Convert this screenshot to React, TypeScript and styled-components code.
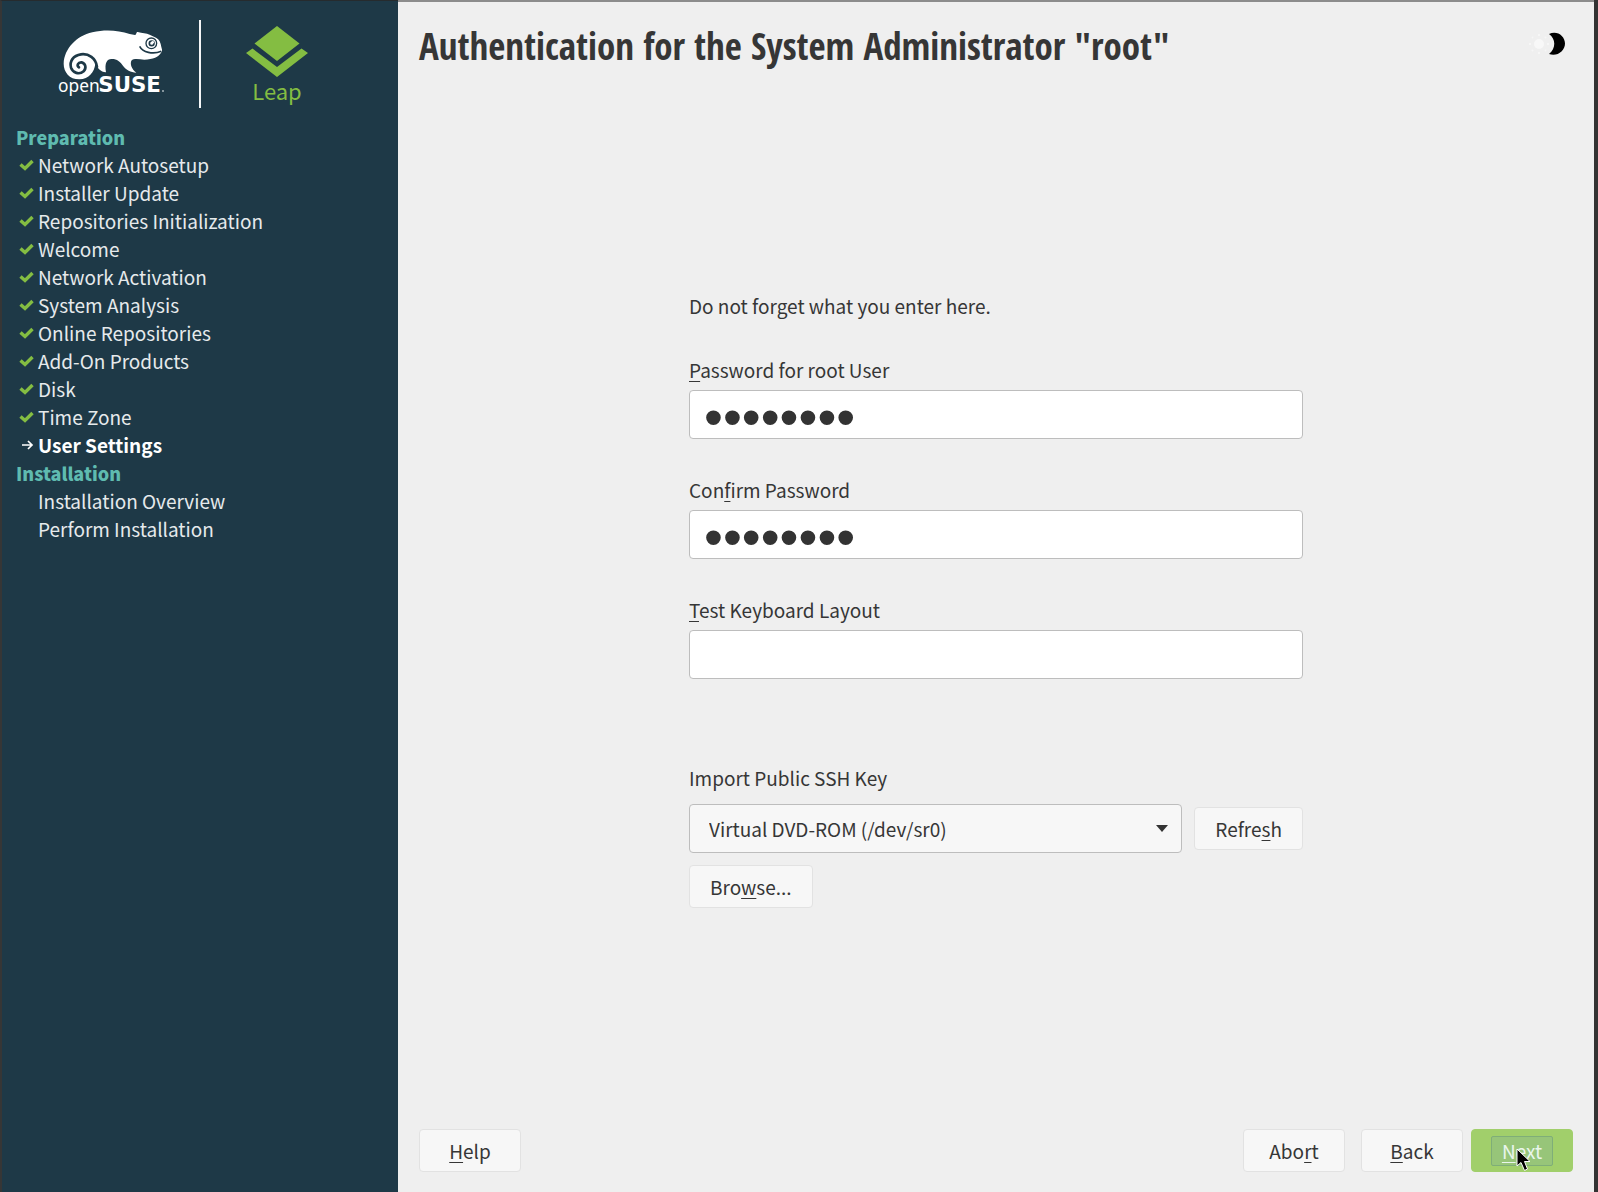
import React, { useState } from "react";
import styled, { createGlobalStyle } from "styled-components";

const sans = '"Noto Sans CJK SC", "Noto Sans", sans-serif';

const GlobalStyle = createGlobalStyle`
  *, *::before, *::after { box-sizing: border-box; }
  body {
    margin: 0;
    background: #efefef;
    color: #363636;
    font-family: ${sans};
    font-size: 19px;
    line-height: 28px;
  }
  button, input, select { font: inherit; color: inherit; }
`;

const Installer = styled.div`
  display: grid;
  grid-template-columns: minmax(240px, 398px) 1fr;
  min-height: 100vh;
  border-right: 4px solid #333333;
`;

const Sidebar = styled.aside`
  background: #1e3947;
  border-top: 1px solid #262b2e;
  border-left: 2px solid #363636;
  padding: 19px 14px;
`;

const Branding = styled.header`
  display: flex;
  align-items: center;
  height: 88px;
  padding-left: 43px;
`;

const Divider = styled.span`
  width: 2px;
  height: 88px;
  margin: 0 45px 0 32px;
  background: #f4f6f7;
`;

const ProductLogo = styled.svg`
  display: block;
  overflow: visible;
`;

const StageTitle = styled.h2`
  margin: 0;
  font-size: 18px;
  line-height: 28px;
  font-weight: 900;
  color: #5fbbb0;
`;

const Stages = styled.nav`
  padding-top: 15px;
`;

const StepList = styled.ol`
  margin: 0;
  padding: 0;
  list-style: none;
`;

const Step = styled.li<{ $current?: boolean }>`
  display: grid;
  grid-template-columns: 22px 1fr;
  align-items: center;
  height: 28px;
  white-space: nowrap;
  color: ${(p) => (p.$current ? "#ffffff" : "#e6eaec")};
  font-weight: ${(p) => (p.$current ? 700 : 400)};
`;

const StepIcon = styled.svg`
  display: block;
  margin-left: 3px;
`;

const Main = styled.main`
  display: flex;
  flex-direction: column;
  border-top: 2px solid #8c8c8c;
  padding: 19px 21px 20px;
`;

const TitleBar = styled.header`
  display: flex;
  align-items: center;
  justify-content: space-between;
`;

const Title = styled.h1`
  margin: 0;
  font-family: "Open Sans Condensed", "Roboto Condensed", sans-serif;
  font-size: 37px;
  line-height: 50px;
  font-weight: 700;
`;

const ThemeButton = styled.button`
  display: block;
  margin-right: 7px;
  padding: 0;
  border: 0;
  background: none;
`;

const Content = styled.div`
  flex: 1;
  display: flex;
  align-items: center;
  justify-content: center;
`;

const Form = styled.form`
  width: 614px;
`;

const Hint = styled.p`
  margin: 0 0 36px;
`;

const Field = styled.div`
  display: flex;
  flex-direction: column;
  gap: 6px;
  margin-bottom: 37px;
`;

const Label = styled.label`
  display: block;
  font-variant-ligatures: no-common-ligatures;
`;

const Mnemonic = styled.u`
  text-decoration-thickness: 1px;
  text-underline-offset: 3px;
`;

const TextBox = styled.input`
  width: 100%;
  height: 49px;
  padding: 0 16px;
  border: 1px solid #bdbdbd;
  border-radius: 4px;
  background: #ffffff;
  color: #333333;
  outline: none;

  &[type="password"] {
    padding: 4px 14px 0;
    font-family: "Liberation Sans", Arial, sans-serif;
    font-size: 54px;
  }
`;

const ImportGroup = styled.section`
  display: grid;
  grid-template-columns: 1fr auto;
  gap: 12px;
  align-items: center;
  justify-items: start;
  margin-top: 85px;
`;

const ImportLabel = styled(Label)`
  grid-column: 1 / -1;
`;

const SelectWrap = styled.div`
  display: grid;
  grid-template-areas: "cell";
  align-items: center;
  width: 100%;
`;

const Select = styled.select`
  grid-area: cell;
  width: 100%;
  height: 49px;
  padding: 0 48px 0 19px;
  border: 1px solid #bdbdbd;
  border-radius: 4px;
  background: #f7f7f7;
  appearance: none;
  outline: none;
`;

const Arrow = styled.svg`
  grid-area: cell;
  justify-self: end;
  margin-right: 14px;
  pointer-events: none;
`;

const Button = styled.button<{ $wide?: boolean }>`
  position: relative;
  height: 43px;
  min-width: ${(p) => (p.$wide ? "102px" : "0")};
  padding: 0 20px;
  border: 1px solid #e2e2e2;
  border-radius: 4px;
  background: #f7f7f7;
`;

const PrimaryButton = styled(Button)`
  padding: 0;
  border-color: #a1cf6b;
  background: #a1cf6b;
  color: #e9f6ec;
`;

const FocusRing = styled.span`
  display: inline-block;
  padding: 0 10px;
  border: 1px solid #7fae78;
  border-radius: 2px;
  background: #97c579;
`;

const Pointer = styled.svg`
  position: absolute;
  left: 44px;
  top: 18px;
`;

const Actions = styled.footer`
  display: flex;
  align-items: center;
`;

const Navigation = styled.div`
  display: flex;
  gap: 16px;
  margin-left: auto;

  & > :last-child { margin-left: -8px; }
`;

function Geeko() {
  return (
    <ProductLogo width="108" height="72" viewBox="0 0 324 216" role="img" aria-label="openSUSE">
      <path
        fill="#fff"
        d="M14 107 C16 62 52 24 100 13 C140 3 178 7 212 18 L228 21 C233 20 231 12 236 12 C250 16 262 16 272 20 L291 29 C301 34 305 43 307 57 C309 65 311 68 307 73 C299 89 282 94 256 95 C241 94 225 90 217 98 C213 108 217 122 232 134 C215 134 201 126 193 115 C184 100 172 92 157 93 C144 94 136 104 141 133 C124 131 116 120 109 107 C106 132 90 153 61 154 C31 154 14 132 14 107Z"
      />
      <path
        fill="none"
        stroke="#1e3947"
        strokeWidth="8"
        strokeLinecap="round"
        d="M114 117 C111 90 88 76 66 79 C42 82 31 101 36 119 C41 135 61 141 74 130 C83 121 80 106 68 103 C57 102 52 113 60 118"
      />
      <path fill="none" stroke="#1e3947" strokeWidth="5" d="M242 55 C251 73 281 80 307 70" />
      <circle cx="277" cy="46" r="16" fill="#fff" stroke="#1e3947" strokeWidth="4" />
      <circle cx="278" cy="46" r="7" fill="none" stroke="#1e3947" strokeWidth="5" />
      <circle cx="281" cy="43" r="4" fill="#fff" />
      <text x="-3" y="193" fill="#fff" fontFamily="Noto Sans, sans-serif" fontSize="52">
        open
      </text>
      <text x="118" y="193" fill="#fff" fontFamily="DejaVu Sans, sans-serif" fontSize="64" fontWeight="700">
        SUSE
      </text>
      <circle cx="312" cy="189" r="3" fill="#a9b4ba" />
    </ProductLogo>
  );
}

function Leap() {
  return (
    <ProductLogo width="62" height="80" viewBox="0 0 62 80" role="img" aria-label="Leap">
      <path fill="#84bd42" d="M31 2 L53.500 19.500 L31 37 L8.500 19.500Z" />
      <path fill="#84bd42" d="M0 29 L6.500 24.500 L31 43 L55.500 24.500 L62 29 L31 53Z" />
      <text x="31" y="76" textAnchor="middle" fill="#84bd42" fontFamily="Noto Sans CJK SC, sans-serif" fontSize="22">
        Leap
      </text>
    </ProductLogo>
  );
}

type Status = "done" | "current" | "todo";

function StatusIcon({ status }: { status: Status }) {
  if (status === "todo") return <span />;
  return (
    <StepIcon width="15" height="14" viewBox="0 0 15 14" aria-hidden="true">
      {status === "done" ? (
        <path d="M1.500 6.500 L6 10.500 L13.500 3" fill="none" stroke="#84bd42" strokeWidth="3.400" />
      ) : (
        <path d="M3 7 H12.500 M9 3 L13 7 L9 11" fill="none" stroke="#fff" strokeWidth="1.700" />
      )}
    </StepIcon>
  );
}

const stages: { title: string; steps: [string, Status][] }[] = [
  {
    title: "Preparation",
    steps: [
      ["Network Autosetup", "done"],
      ["Installer Update", "done"],
      ["Repositories Initialization", "done"],
      ["Welcome", "done"],
      ["Network Activation", "done"],
      ["System Analysis", "done"],
      ["Online Repositories", "done"],
      ["Add-On Products", "done"],
      ["Disk", "done"],
      ["Time Zone", "done"],
      ["User Settings", "current"],
    ],
  },
  {
    title: "Installation",
    steps: [
      ["Installation Overview", "todo"],
      ["Perform Installation", "todo"],
    ],
  },
];

export default function App() {
  const [password, setPassword] = useState("geeko-42");
  const [confirm, setConfirm] = useState("geeko-42");

  return (
    <>
      <GlobalStyle />
      <Installer>
        <Sidebar>
          <Branding>
            <Geeko />
            <Divider />
            <Leap />
          </Branding>
          <Stages>
            {stages.map((stage) => (
              <React.Fragment key={stage.title}>
                <StageTitle>{stage.title}</StageTitle>
                <StepList>
                  {stage.steps.map(([name, status]) => (
                    <Step key={name} $current={status === "current"}>
                      <StatusIcon status={status} />
                      <span>{name}</span>
                    </Step>
                  ))}
                </StepList>
              </React.Fragment>
            ))}
          </Stages>
        </Sidebar>

        <Main>
          <TitleBar>
            <Title>Authentication for the System Administrator "root"</Title>
            <ThemeButton type="button" aria-label="Toggle theme">
              <svg width="38" height="24" viewBox="0 0 38 24" aria-hidden="true">
                <circle cx="11" cy="13" r="5" fill="#f8f8f8" />
                <path
                  d="M11 3v2M11 21v2M1 13h2M19 13h2M4 6l1 1M17 19l1 1M4 20l1-1M17 7l1-1"
                  stroke="#f6f6f6"
                  strokeWidth="2"
                />
                <path d="M21 3 C29 -1 37 5 37 12.500 C37 20 29 26 21 23 C28 17 28 8 21 3Z" fill="#000" />
              </svg>
            </ThemeButton>
          </TitleBar>

          <Content>
            <Form onSubmit={(e) => e.preventDefault()}>
              <Hint>Do not forget what you enter here.</Hint>
              <Field>
                <Label htmlFor="password">
                  <Mnemonic>P</Mnemonic>assword for root User
                </Label>
                <TextBox id="password" type="password" value={password} onChange={(e) => setPassword(e.target.value)} />
              </Field>
              <Field>
                <Label htmlFor="confirm">
                  Con<Mnemonic>f</Mnemonic>irm Password
                </Label>
                <TextBox id="confirm" type="password" value={confirm} onChange={(e) => setConfirm(e.target.value)} />
              </Field>
              <Field>
                <Label htmlFor="layout">
                  <Mnemonic>T</Mnemonic>est Keyboard Layout
                </Label>
                <TextBox id="layout" type="text" />
              </Field>
              <ImportGroup>
                <ImportLabel htmlFor="device">Import Public SSH Key</ImportLabel>
                <SelectWrap>
                  <Select id="device">
                    <option>Virtual DVD-ROM (/dev/sr0)</option>
                  </Select>
                  <Arrow width="12" height="7" viewBox="0 0 12 7" aria-hidden="true">
                    <path d="M0 0 H12 L6 7Z" fill="#333" />
                  </Arrow>
                </SelectWrap>
                <Button type="button">
                  Refre<Mnemonic>s</Mnemonic>h
                </Button>
                <Button type="button">
                  Bro<Mnemonic>w</Mnemonic>se...
                </Button>
              </ImportGroup>
            </Form>
          </Content>

          <Actions>
            <Button type="button" $wide>
              <Mnemonic>H</Mnemonic>elp
            </Button>
            <Navigation>
              <Button type="button" $wide>
                Abo<Mnemonic>r</Mnemonic>t
              </Button>
              <Button type="button" $wide>
                <Mnemonic>B</Mnemonic>ack
              </Button>
              <PrimaryButton type="button" $wide>
                <FocusRing>
                  <Mnemonic>N</Mnemonic>ext
                </FocusRing>
                <Pointer width="15" height="24" viewBox="0 0 15 24" aria-hidden="true">
                  <path
                    d="M1 1 V18 L5 14.500 L8.500 22.500 L11.500 21 L8.500 13.500 H14Z"
                    fill="#000"
                    stroke="#fff"
                    strokeWidth="1"
                  />
                </Pointer>
              </PrimaryButton>
            </Navigation>
          </Actions>
        </Main>
      </Installer>
    </>
  );
}
